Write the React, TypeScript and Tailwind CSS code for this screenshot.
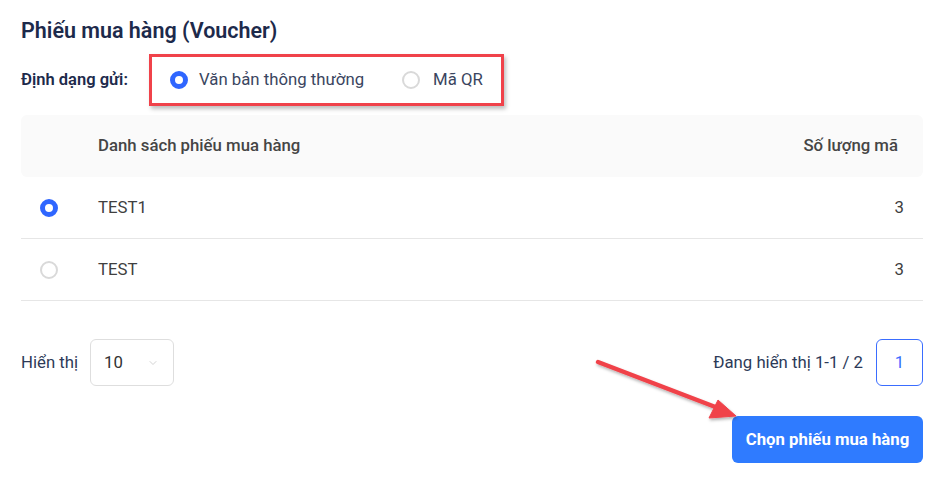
import { ChevronDown } from 'lucide-react';

const vouchers = [
  { name: 'TEST1', count: 3, selected: true },
  { name: 'TEST', count: 3, selected: false },
];

function Radio({ checked }: { checked: boolean }) {
  return checked ? (
    <span className="block w-[18px] h-[18px] rounded-full border-[5px] border-[#2f66ff] bg-white" />
  ) : (
    <span className="block w-[18px] h-[18px] rounded-full border-2 border-[#d9d9d9] bg-white" />
  );
}

export default function App() {
  return (
    <div
      className="relative w-[936px] h-[478px] bg-white pl-[21px] pr-[13px] pt-[17px] overflow-hidden"
      style={{ fontFamily: 'Roboto, "Noto Sans", sans-serif' }}
    >
      {/* Title */}
      <h2 className="text-[21.5px] leading-[28px] font-semibold text-[#1d2a4b]">Phiếu mua hàng (Voucher)</h2>

      {/* Send format */}
      <div className="mt-[9px] flex items-center h-[52px]">
        <span className="w-[128px] text-[16.5px] font-semibold text-[#1d2a4b]">Định dạng gửi:</span>
        <div className="flex items-center h-[52px] border-[3px] border-[#f0424a] pl-[18px] pr-[18px] shadow-[2px_3px_4px_rgba(0,0,0,0.25)]">
          <label className="flex items-center gap-[11px]">
            <Radio checked />
            <span className="text-[16.75px] text-[#3a4560]">Văn bản thông thường</span>
          </label>
          <label className="flex items-center gap-[13px] ml-[38px]">
            <Radio checked={false} />
            <span className="text-[16.75px] text-[#3a4560]">Mã QR</span>
          </label>
        </div>
      </div>

      {/* Voucher table */}
      <div className="mt-[9px]">
        <div className="flex items-center h-[62px] bg-[#fafafa] rounded-md text-[16.75px] font-medium text-[#454545]">
          <div className="w-[77px]" />
          <div className="flex-1">Danh sách phiếu mua hàng</div>
          <div className="pr-[25px]">Số lượng mã</div>
        </div>
        {vouchers.map((v) => (
          <div key={v.name} className="flex items-center h-[62px] border-b border-[#e6e6e6] text-[16.75px] text-[#404040]">
            <div className="w-[77px] pl-[19px]">
              <Radio checked={v.selected} />
            </div>
            <div className="flex-1">{v.name}</div>
            <div className="pr-[19px]">{v.count}</div>
          </div>
        ))}
      </div>

      {/* Pagination */}
      <div className="mt-[38px] flex items-center justify-between">
        <div className="flex items-center gap-[12px]">
          <span className="text-[16.75px] text-[#2d3a58]">Hiển thị</span>
          <div className="flex items-center justify-between w-[84px] h-[47px] border border-[#dedede] rounded-md pl-[13px] pr-[14px]">
            <span className="text-[16.75px] text-[#333]">10</span>
            <ChevronDown className="w-[12px] h-[12px] text-[#c4c4c4]" strokeWidth={1.5} />
          </div>
        </div>
        <div className="flex items-center gap-[13px]">
          <span className="text-[16.75px] text-[#2d3a58]">Đang hiển thị 1-1 / 2</span>
          <div className="flex items-center justify-center w-[47px] h-[47px] border border-[#3a6dff] rounded-md text-[16.75px] text-[#3a6dff]">
            1
          </div>
        </div>
      </div>

      <div className="mt-[30px] flex justify-end">
        <button className="w-[191px] h-[47px] rounded-md bg-[#2f7bff] text-white text-[16.75px] font-bold">
          Chọn phiếu mua hàng
        </button>
      </div>

      {/* Annotation arrow */}
      <svg className="absolute left-0 top-0 pointer-events-none" width="936" height="478">
        <defs>
          <filter id="sh" x="-20%" y="-20%" width="140%" height="140%">
            <feDropShadow dx="1" dy="2" stdDeviation="1.5" floodColor="#000" floodOpacity="0.3" />
          </filter>
        </defs>
        <g filter="url(#sh)" fill="#f0424a" stroke="#f0424a">
          <line x1="598" y1="362" x2="718" y2="408" strokeWidth="4.5" strokeLinecap="round" />
          <polygon points="736,416 709,418 718,400" strokeWidth="1" strokeLinejoin="round" />
        </g>
      </svg>
    </div>
  );
}
